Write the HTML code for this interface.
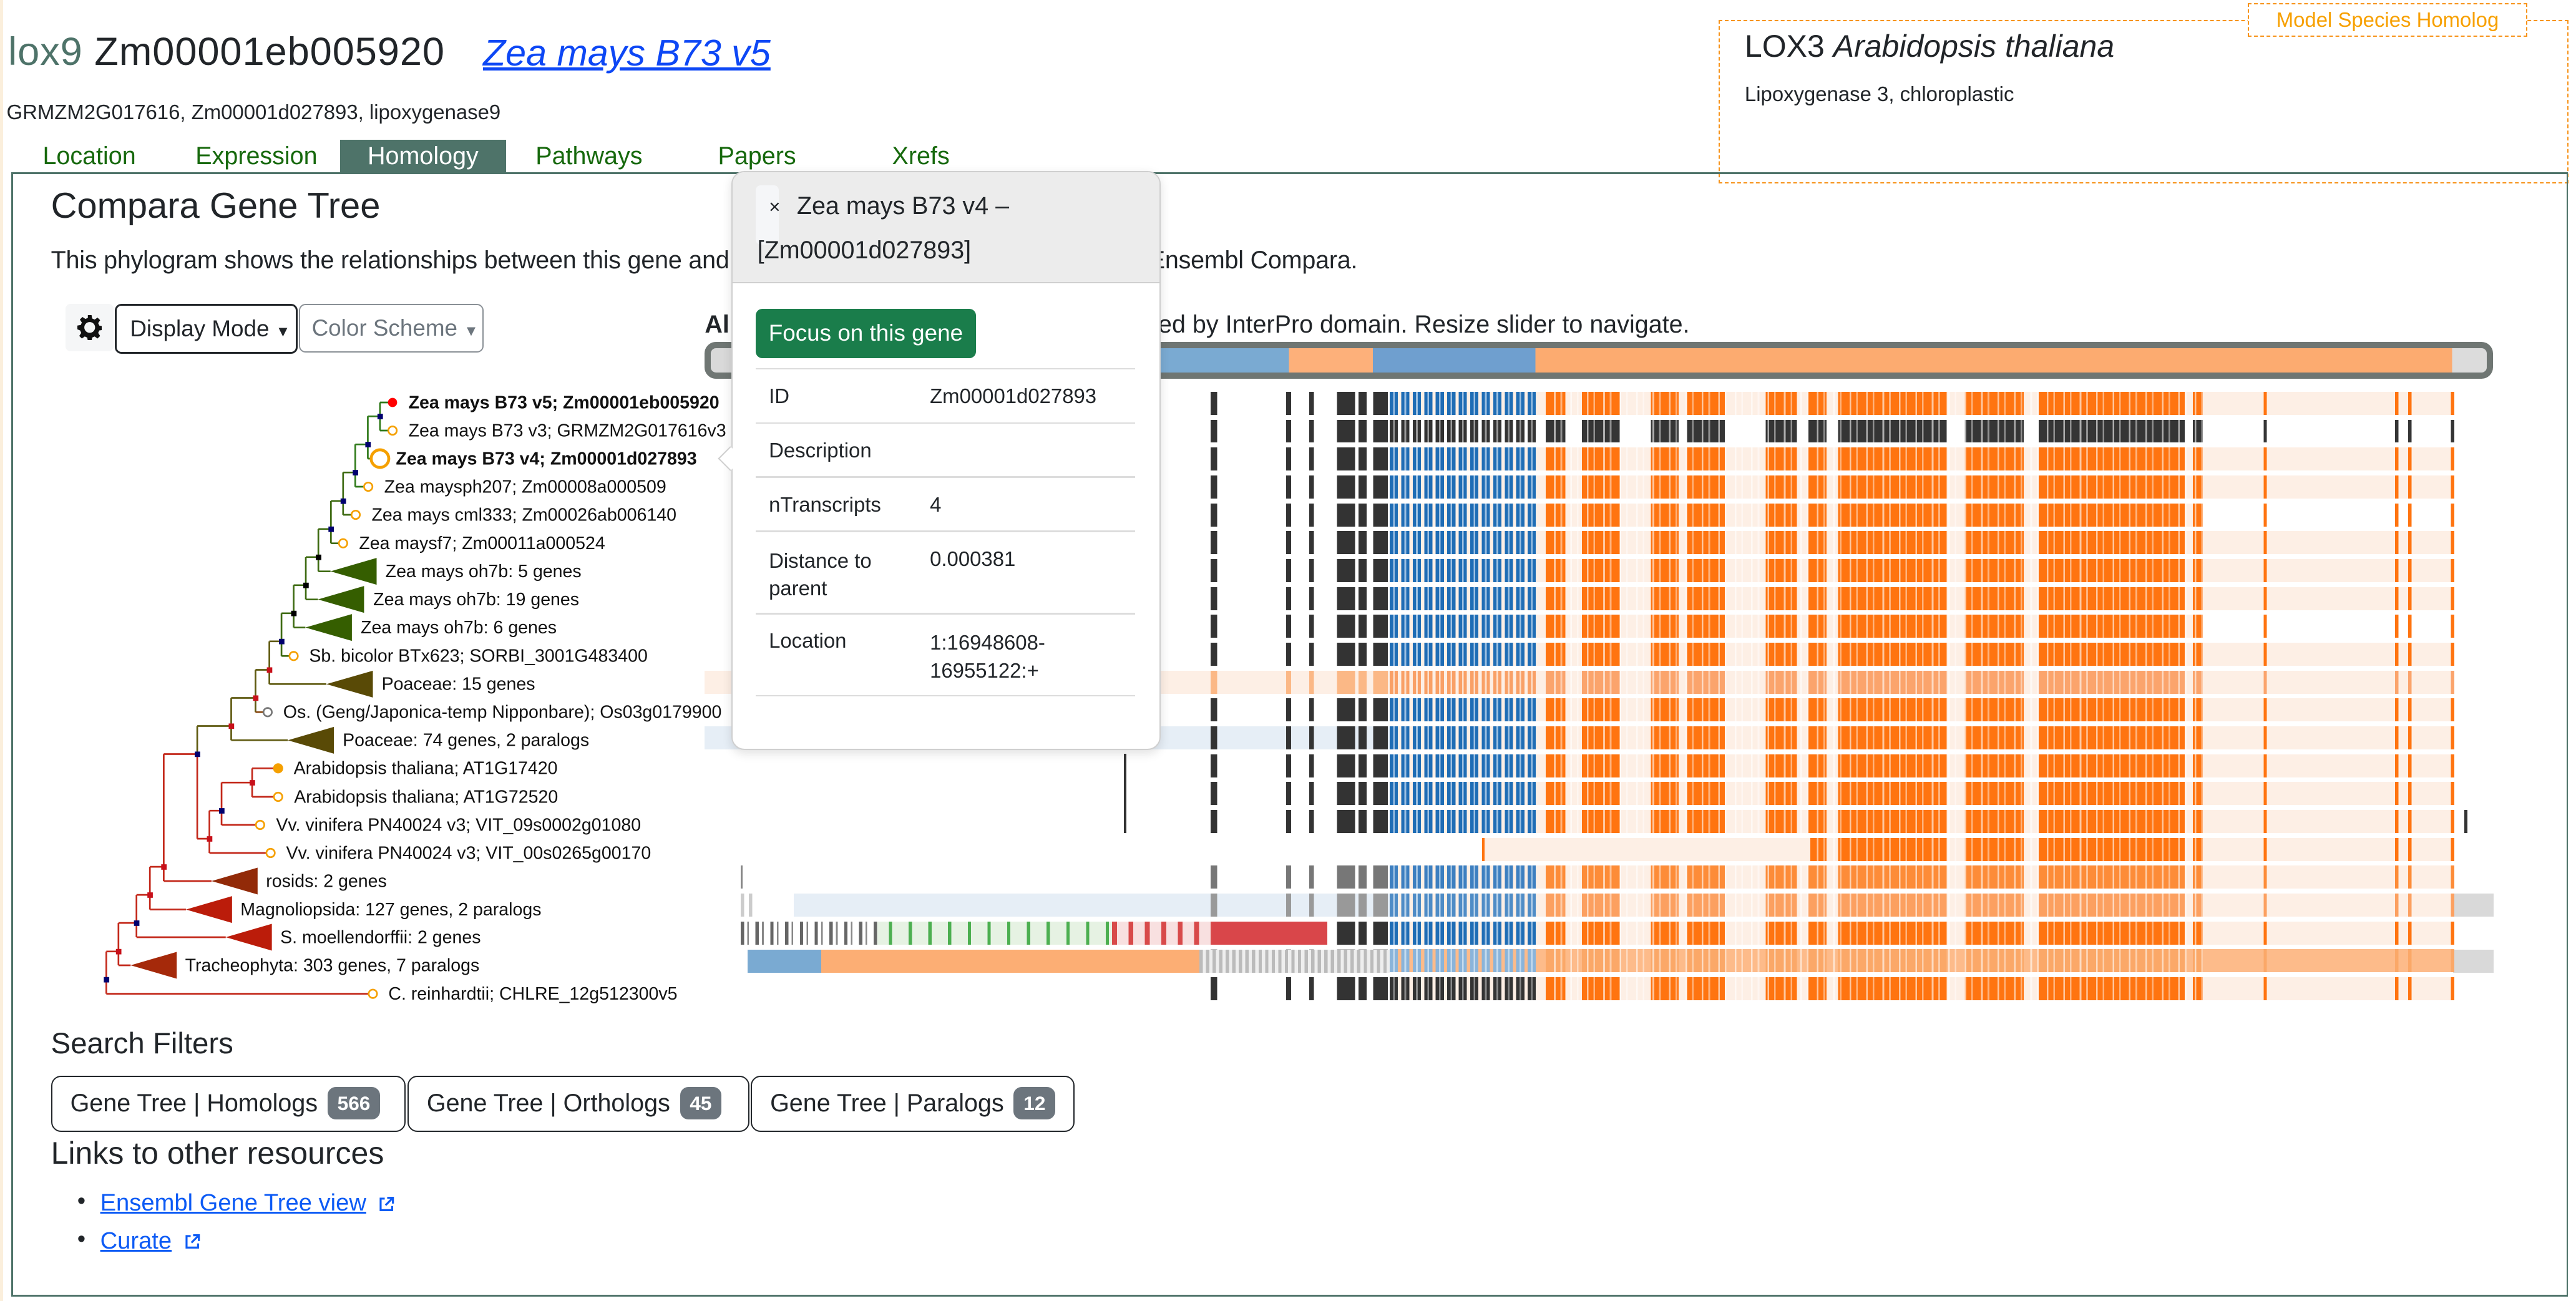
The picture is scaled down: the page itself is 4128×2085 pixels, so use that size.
<!DOCTYPE html>
<html><head><meta charset="utf-8">
<style>
html{overflow:hidden}
body{margin:0;width:1568px;height:792px;zoom:2.6327;position:relative;overflow:hidden;background:#fff;font-family:"Liberation Sans",sans-serif;color:#212529}
.a{position:absolute;white-space:nowrap}
.tab{position:absolute;top:85px;height:20px;line-height:20px;font-size:15px;color:#17690d}
.ar{position:absolute;left:429px;width:1089px;height:14px;
--k:#333;--b1:#1f6db5;--b2:#9cc0e2;--o:#ff7410;--bg:#fdefe5;
background-image:
repeating-linear-gradient(90deg,transparent 0 5px,rgba(255,255,255,.6) 5px 6px,transparent 6px 9px,rgba(255,255,255,.45) 9px 10px),
linear-gradient(90deg,transparent 308px,var(--k) 308px 312px,transparent 312px 354px,var(--k) 354px 357px,transparent 357px 368px,var(--k) 368px 371px,transparent 371px 385px,var(--k) 385px 396px,transparent 396px 398px,var(--k) 398px 403px,transparent 403px 407px,var(--k) 407px 416px,transparent 416px),
repeating-linear-gradient(90deg,var(--b1) 0 2px,var(--b2) 2px 3px,var(--b1) 3px 5px,transparent 5px 7px),
linear-gradient(90deg,transparent 512px,var(--o) 512px 524px,transparent 524px 534px,var(--o) 534px 557px,transparent 557px 576px,var(--o) 576px 593px,transparent 593px 598px,var(--o) 598px 621px,transparent 621px 646px,var(--o) 646px 665px,transparent 665px 672px,var(--o) 672px 683px,transparent 683px 690px,var(--o) 690px 756px,transparent 756px 767px,var(--o) 767px 803px,transparent 803px 812px,var(--o) 812px 901px,transparent 901px 906px,var(--o) 906px 912px,transparent 912px 949px,var(--o) 949px 951px,transparent 951px 1029px,var(--o) 1029px 1031px,transparent 1031px 1037px,var(--o) 1037px 1039px,transparent 1039px 1063px,var(--o) 1063px 1065px,transparent 1065px),
linear-gradient(var(--bg),var(--bg));
background-size:400px 100%,100% 100%,89px 100%,100% 100%,647px 100%;
background-position:512px 0,0 0,417px 0,0 0,417px 0;
background-repeat:no-repeat}
.g{--o:#353535;--b1:#333;--b2:#999;--bg:transparent}
.lt{--k:#fbb886;--o:#fba46c;--b1:#f9a066;--b2:#fde0cc}
.gy{--k:#777;--o:#fd8c38;--b1:#3d7fc0}
.r18{--o:#fca060;--b1:#4f8cc6;--b2:#b8d2ea;--k:#999}
.r20{--o:#fba868;--b1:#8ab4da;--b2:#c5dbee;--k:#bbb;--bg:#fdbb8a}
.r21{--b1:#333;--b2:#888}
.nb{--k:transparent;--b1:transparent;--b2:transparent}
.d{position:absolute}
.btn{position:absolute;top:655px;height:34px;border:1px solid #212529;border-radius:6px;box-sizing:border-box;font-size:15px;line-height:32px;padding-left:11px}
.badge{display:inline-block;background:#6c757d;color:#fff;font-weight:bold;font-size:12px;border-radius:5px;padding:0 6px;line-height:20px;margin-left:6px;vertical-align:1px}
.pl{position:absolute;left:468px;font-size:12.5px}
.pv{position:absolute;left:566px;font-size:12.5px}
.sep{position:absolute;left:460px;width:231px;height:1px;background:#dcdcdc}
</style></head><body>
<div class="d" style="left:0;top:0;width:2px;height:792px;background:#fbefdc"></div>
<div class="a" style="left:5px;top:18px;font-size:24px;letter-spacing:.35px"><span style="color:#4e7369">lox9</span> Zm00001eb005920</div>
<div class="a" style="left:294px;top:19px;font-size:22.5px;color:#0d47f5;font-style:italic;text-decoration:underline">Zea mays B73 v5</div>
<div class="a" style="left:4px;top:61px;font-size:12.5px">GRMZM2G017616, Zm00001d027893, lipoxygenase9</div>

<div class="d" style="left:1046px;top:12px;width:516px;height:98px;border:1px dashed #f7931a;background:#fff"></div>
<div class="a" style="left:1062px;top:17px;font-size:19px">LOX3 <i>Arabidopsis thaliana</i></div>
<div class="a" style="left:1062px;top:50px;font-size:12.5px">Lipoxygenase 3, chloroplastic</div>
<div class="a" style="left:1368px;top:2px;width:169px;height:19px;border:1px dashed #f7931a;background:#fff;color:#f7a000;font-size:12.5px;text-align:center;line-height:19px">Model Species Homolog</div>

<div class="d" style="left:7px;top:105px;width:1554px;height:682px;border:1.5px solid #4e7369;border-right:1px solid #4e7369"></div>
<div class="tab" style="left:26px">Location</div>
<div class="tab" style="left:119px">Expression</div>
<div class="tab" style="left:207px;width:101px;background:#4e7369;color:#fff;text-align:center">Homology</div>
<div class="tab" style="left:326px">Pathways</div>
<div class="tab" style="left:437px">Papers</div>
<div class="tab" style="left:543px">Xrefs</div>

<div class="a" style="left:31px;top:113px;font-size:22px">Compara Gene Tree</div>
<div class="a" style="left:31px;top:150px;font-size:15px;letter-spacing:-0.08px">This phylogram shows the relationships between this gene and other similar genes, as determined by Ensembl Compara.</div>

<div class="d" style="left:40px;top:185px;width:29px;height:29px;background:#f5f6f7;border-radius:3px"></div>
<svg class="d" style="left:47px;top:192px" width="15" height="15" viewBox="0 0 16 16"><path fill="#111" d="M8 4.5a3.5 3.5 0 1 0 0 7 3.5 3.5 0 0 0 0-7zm0 2a1.5 1.5 0 1 1 0 3 1.5 1.5 0 0 1 0-3zM6.8 0h2.4l.4 2.2 1.6.7 1.9-1.3 1.7 1.7-1.3 1.9.7 1.6 2.2.4v2.4l-2.2.4-.7 1.6 1.3 1.9-1.7 1.7-1.9-1.3-1.6.7-.4 2.2H6.8l-.4-2.2-1.6-.7-1.9 1.3-1.7-1.7 1.3-1.9-.7-1.6L0 9.2V6.8l2.2-.4.7-1.6-1.3-1.9 1.7-1.7 1.9 1.3 1.6-.7z"/><circle cx="8" cy="8" r="1.6" fill="#f5f6f7"/></svg>
<div class="a" style="left:70px;top:185px;height:28px;border:1.5px solid #212529;border-radius:4px;font-size:14px;line-height:28px;padding-left:8px;width:101px">Display Mode <span style="font-size:9px">▼</span></div>
<div class="a" style="left:182px;top:185px;width:104px;height:28px;border:1px solid #8a9096;border-radius:4px;font-size:14px;line-height:28px;padding-left:7px;color:#6c757d">Color Scheme <span style="font-size:9px">▼</span></div>

<div class="a" style="left:429px;top:189px;font-size:15px;font-weight:bold">Al</div>
<div class="a" style="left:705px;top:189px;font-size:15px">ed by InterPro domain. Resize slider to navigate.</div>

<div class="d" style="left:429px;top:208px;width:1081px;height:15px;border:4px solid #6f7673;border-radius:7px;background:linear-gradient(90deg,#d9d9d9 0 16px,#7aaad2 16px 352px,#fdb07a 352px 403px,#6f9fcf 403px 502px,#fcab70 502px 1060px,#dcdcdc 1060px)"></div>

<div class="d" style="left:429px;top:408.2px;width:1064px;height:14px;background:#fdefe5"></div>
<div class="d" style="left:429px;top:442.1px;width:417px;height:14px;background:#e6eef6"></div>
<div class="d" style="left:483px;top:544px;width:363px;height:14px;background:#e6eef6"></div>
<div class="d" style="left:1493px;top:544px;width:25px;height:14px;background:#d9d9d9"></div>
<div class="d" style="left:1493px;top:578px;width:25px;height:14px;background:#d9d9d9"></div>

<div class="ar" style="top:238.5px"></div>
<div class="ar g" style="top:255.5px"></div>
<div class="ar" style="top:272.4px"></div>
<div class="ar" style="top:289.4px"></div>
<div class="ar" style="top:306.4px;background-size:400px 100%,100% 100%,89px 100%,100% 100%,495px 100%"></div>
<div class="ar" style="top:323.4px"></div>
<div class="ar" style="top:340.3px"></div>
<div class="ar" style="top:357.3px"></div>
<div class="ar" style="top:374.3px;background-size:400px 100%,100% 100%,89px 100%,100% 100%,495px 100%"></div>
<div class="ar" style="top:391.2px"></div>
<div class="ar lt" style="top:408.2px"></div>
<div class="ar" style="top:425.2px"></div>
<div class="ar" style="top:442.1px"></div>
<div class="ar" style="top:459.1px"></div>
<div class="ar" style="top:476.1px"></div>
<div class="ar" style="top:493px"></div>
<div class="ar nb" style="top:510px"></div>
<div class="d" style="left:846px;top:510px;width:56px;height:14px;background:#fff"></div>
<div class="d" style="left:902px;top:510px;width:200px;height:14px;background:#fdefe5"></div>
<div class="d" style="left:902px;top:510px;width:1.5px;height:14px;background:#ff7410"></div>
<div class="ar gy" style="top:527px"></div>
<div class="ar r18" style="top:544px"></div>
<div class="ar" style="top:560.9px"></div>
<div class="ar r20" style="top:577.9px"></div>
<div class="ar r21" style="top:594.9px"></div>
<div class="d" style="left:684px;top:459px;width:1.5px;height:48px;background:#333"></div>
<div class="d" style="left:1500px;top:493px;width:2px;height:14px;background:#333"></div>
<div class="d" style="left:451px;top:527px;width:1px;height:14px;background:#888"></div>
<div class="d" style="left:451px;top:544px;width:8px;height:14px;background:repeating-linear-gradient(90deg,#ccc 0 2px,transparent 2px 5px)"></div>
<div class="d" style="left:451px;top:561px;width:84px;height:14px;background:repeating-linear-gradient(90deg,#666 0 2px,transparent 2px 4px,#888 4px 5px,transparent 5px 9px)"></div>
<div class="d" style="left:534px;top:561px;width:143px;height:14px;background:repeating-linear-gradient(90deg,transparent 0 7px,#4caf50 7px 9px,transparent 9px 12px),#e6f2e3"></div>
<div class="d" style="left:677px;top:561px;width:61px;height:14px;background:repeating-linear-gradient(90deg,#d84a4a 0 3px,transparent 3px 10px),#f8e0e0"></div>
<div class="d" style="left:738px;top:561px;width:70px;height:14px;background:#d9464a"></div>
<div class="d" style="left:455px;top:578px;width:45px;height:14px;background:#7aaad2"></div>
<div class="d" style="left:500px;top:578px;width:230px;height:14px;background:#fcae74"></div>
<div class="d" style="left:730px;top:578px;width:116px;height:14px;background:repeating-linear-gradient(90deg,#bbb 0 2px,#eee 2px 4px)"></div>

<svg class="d" style="left:46.5px;top:227.2px;overflow:visible" width="400" height="400" viewBox="0 0 1568 1568">
<g fill="none" stroke-width="4">
<path stroke="#2f7a1a" d="M725 70V137M725 70H746M725 137H746M696 103V204M696 103H725M696 204H703M666 170V271M666 170H696M666 271H688"/>
<path stroke="#3e6b12" d="M637 237V338M637 237H666M637 338H658M608 305V406M608 305H637M608 406H628M578 372V473M578 372H608M578 473H607M548 439V540M548 439H578M548 540H577M519 506V607M519 506H548M519 607H547M490 573V675M490 573H519M490 675H510"/>
<path stroke="#5f5a10" d="M461 640V742M461 640H490M461 742H597M428 708V809M428 708H461M370 775V876M370 775H428M370 876H505M289 842V909M289 842H370"/>
<path stroke="#8a4a14" d="M428 809H448"/>
<path stroke="#c3281a" d="M289 909V1111M289 1111H318M420 943V1011M420 943H473M420 1011H473M347 977V1078M347 977H420M347 1078H430M318 1044V1145M318 1044H347M318 1145H455M209 909V1212M209 909H289M209 1212H323M176 1178V1280M176 1178H209M176 1280H262M144 1245V1346M144 1245H176M144 1346H357M101 1312V1413M101 1312H144M101 1413H130M72 1380V1481M72 1380H101M72 1481H699"/>
</g>
<g fill="#00006e">
<rect x="719" y="97" width="13" height="13"/><rect x="690" y="164" width="13" height="13"/><rect x="660" y="231" width="13" height="13"/><rect x="631" y="299" width="13" height="13"/><rect x="602" y="366" width="13" height="13"/><rect x="484" y="634" width="13" height="13"/><rect x="283" y="903" width="13" height="13"/><rect x="341" y="1038" width="13" height="13"/><rect x="138" y="1306" width="13" height="13"/><rect x="66" y="1441" width="13" height="13"/>
</g>
<g fill="#000"><rect x="572" y="433" width="13" height="13"/><rect x="542" y="500" width="13" height="13"/><rect x="513" y="567" width="13" height="13"/></g>
<g fill="#c8101a"><rect x="455" y="702" width="13" height="13"/><rect x="422" y="769" width="13" height="13"/><rect x="364" y="836" width="13" height="13"/><rect x="414" y="971" width="13" height="13"/><rect x="312" y="1105" width="13" height="13"/><rect x="203" y="1172" width="13" height="13"/><rect x="170" y="1239" width="13" height="13"/><rect x="95" y="1374" width="13" height="13"/></g>
<circle cx="755" cy="70" r="11" fill="#f00"/>
<g fill="#fff" stroke="#f5a000" stroke-width="4">
<circle cx="755" cy="137" r="10"/><circle cx="697" cy="271" r="10"/><circle cx="667" cy="338" r="10"/><circle cx="637" cy="406" r="10"/><circle cx="519" cy="675" r="10"/><circle cx="482" cy="1011" r="10"/><circle cx="439" cy="1078" r="10"/><circle cx="464" cy="1145" r="10"/><circle cx="708" cy="1481" r="10"/>
<circle cx="725" cy="204" r="21" stroke-width="7"/>
</g>
<circle cx="457" cy="809" r="10" fill="#fff" stroke="#777" stroke-width="4"/>
<circle cx="482" cy="943" r="12" fill="#f5a000"/>
<g>
<path fill="#355e00" d="M607 473L717 441V505Z"/><path fill="#355e00" d="M577 540L687 508V572Z"/><path fill="#355e00" d="M547 607L658 575V639Z"/>
<path fill="#594a06" d="M597 742L708 710V774Z"/><path fill="#594a06" d="M505 876L615 844V908Z"/>
<path fill="#922a08" d="M323 1212L433 1180V1244Z"/><path fill="#bb1c0a" d="M262 1280L372 1248V1312Z"/><path fill="#bb1c0a" d="M357 1346L467 1314V1378Z"/><path fill="#a5290a" d="M130 1413L240 1381V1445Z"/>
</g>
<g font-family="Liberation Sans, sans-serif" font-size="42.5" fill="#111">
<text x="793" y="84" font-weight="bold">Zea mays B73 v5; Zm00001eb005920</text>
<text x="793" y="151">Zea mays B73 v3; GRMZM2G017616v3</text>
<text x="763" y="218" font-weight="bold">Zea mays B73 v4; Zm00001d027893</text>
<text x="735" y="285">Zea maysph207; Zm00008a000509</text>
<text x="705" y="352">Zea mays cml333; Zm00026ab006140</text>
<text x="675" y="420">Zea maysf7; Zm00011a000524</text>
<text x="738" y="487">Zea mays oh7b: 5 genes</text>
<text x="709" y="554">Zea mays oh7b: 19 genes</text>
<text x="679" y="621">Zea mays oh7b: 6 genes</text>
<text x="556" y="689">Sb. bicolor BTx623; SORBI_3001G483400</text>
<text x="729" y="756">Poaceae: 15 genes</text>
<text x="494" y="823">Os. (Geng/Japonica-temp Nipponbare); Os03g0179900</text>
<text x="636" y="890">Poaceae: 74 genes, 2 paralogs</text>
<text x="519" y="957">Arabidopsis thaliana; AT1G17420</text>
<text x="520" y="1025">Arabidopsis thaliana; AT1G72520</text>
<text x="477" y="1092">Vv. vinifera PN40024 v3; VIT_09s0002g01080</text>
<text x="501" y="1159">Vv. vinifera PN40024 v3; VIT_00s0265g00170</text>
<text x="453" y="1226">rosids: 2 genes</text>
<text x="392" y="1294">Magnoliopsida: 127 genes, 2 paralogs</text>
<text x="487" y="1360">S. moellendorffii: 2 genes</text>
<text x="260" y="1427">Tracheophyta: 303 genes, 7 paralogs</text>
<text x="745" y="1495">C. reinhardtii; CHLRE_12g512300v5</text>
</g>
</svg>

<div class="d" style="left:445px;top:104px;width:260px;height:351px;background:#fff;border:1px solid #cfcfcf;border-radius:8px;box-shadow:0 2px 6px rgba(0,0,0,.12);overflow:hidden">
<div style="height:67px;background:#ececec;border-bottom:1px solid #cfcfcf"></div>
</div>
<div class="d" style="left:439px;top:274px;width:10px;height:10px;background:#fff;border-left:1px solid #cfcfcf;border-bottom:1px solid #cfcfcf;transform:rotate(45deg)"></div>
<div class="d" style="left:460px;top:113px;width:14px;height:36px;background:#f5f6f8;border-radius:3px"></div>
<div class="a" style="left:468px;top:119px;font-size:12px">×</div>
<div class="a" style="left:485px;top:117px;font-size:15px">Zea mays B73 v4 –</div>
<div class="a" style="left:461px;top:144px;font-size:15px">[Zm00001d027893]</div>
<div class="a" style="left:460px;top:188px;width:134px;height:30px;background:#1a7d4b;border-radius:4px;color:#fff;font-size:14px;line-height:30px;text-align:center">Focus on this gene</div>
<div class="sep" style="top:224px"></div><div class="sep" style="top:257px"></div><div class="sep" style="top:290px"></div><div class="sep" style="top:323px"></div><div class="sep" style="top:373px"></div><div class="sep" style="top:423px"></div>
<div class="pl" style="top:234px">ID</div><div class="pv" style="top:234px">Zm00001d027893</div>
<div class="pl" style="top:267px">Description</div>
<div class="pl" style="top:300px">nTranscripts</div><div class="pv" style="top:300px">4</div>
<div class="pl" style="top:333px;line-height:17px">Distance to<br>parent</div><div class="pv" style="top:333px">0.000381</div>
<div class="pl" style="top:383px;">Location</div><div class="pv" style="top:383px;line-height:17px">1:16948608-<br>16955122:+</div>

<div class="a" style="left:31px;top:625px;font-size:18px">Search Filters</div>
<div class="btn" style="left:31px;width:216px">Gene Tree | Homologs<span class="badge">566</span></div>
<div class="btn" style="left:248px;width:208px">Gene Tree | Orthologs<span class="badge">45</span></div>
<div class="btn" style="left:457px;width:197px">Gene Tree | Paralogs<span class="badge">12</span></div>
<div class="a" style="left:31px;top:691px;font-size:19px">Links to other resources</div>
<div class="a" style="left:47px;top:723px;font-size:14.5px">•</div>
<div class="a" style="left:61px;top:724px;font-size:14.5px;color:#0d5bf5;text-decoration:underline">Ensembl Gene Tree view</div>
<div class="a" style="left:47px;top:746px;font-size:14.5px">•</div>
<div class="a" style="left:61px;top:747px;font-size:14.5px;color:#0d5bf5;text-decoration:underline">Curate</div>
<svg class="d" style="left:230px;top:728px" width="10" height="10" viewBox="0 0 10 10" fill="none" stroke="#0d5bf5" stroke-width="1.2"><path d="M4 1.5H1.5V8.5H8.5V6M5.5 1H9V4.5M9 1L4.5 5.5"/></svg>
<svg class="d" style="left:112px;top:751px" width="10" height="10" viewBox="0 0 10 10" fill="none" stroke="#0d5bf5" stroke-width="1.2"><path d="M4 1.5H1.5V8.5H8.5V6M5.5 1H9V4.5M9 1L4.5 5.5"/></svg>
</body></html>
